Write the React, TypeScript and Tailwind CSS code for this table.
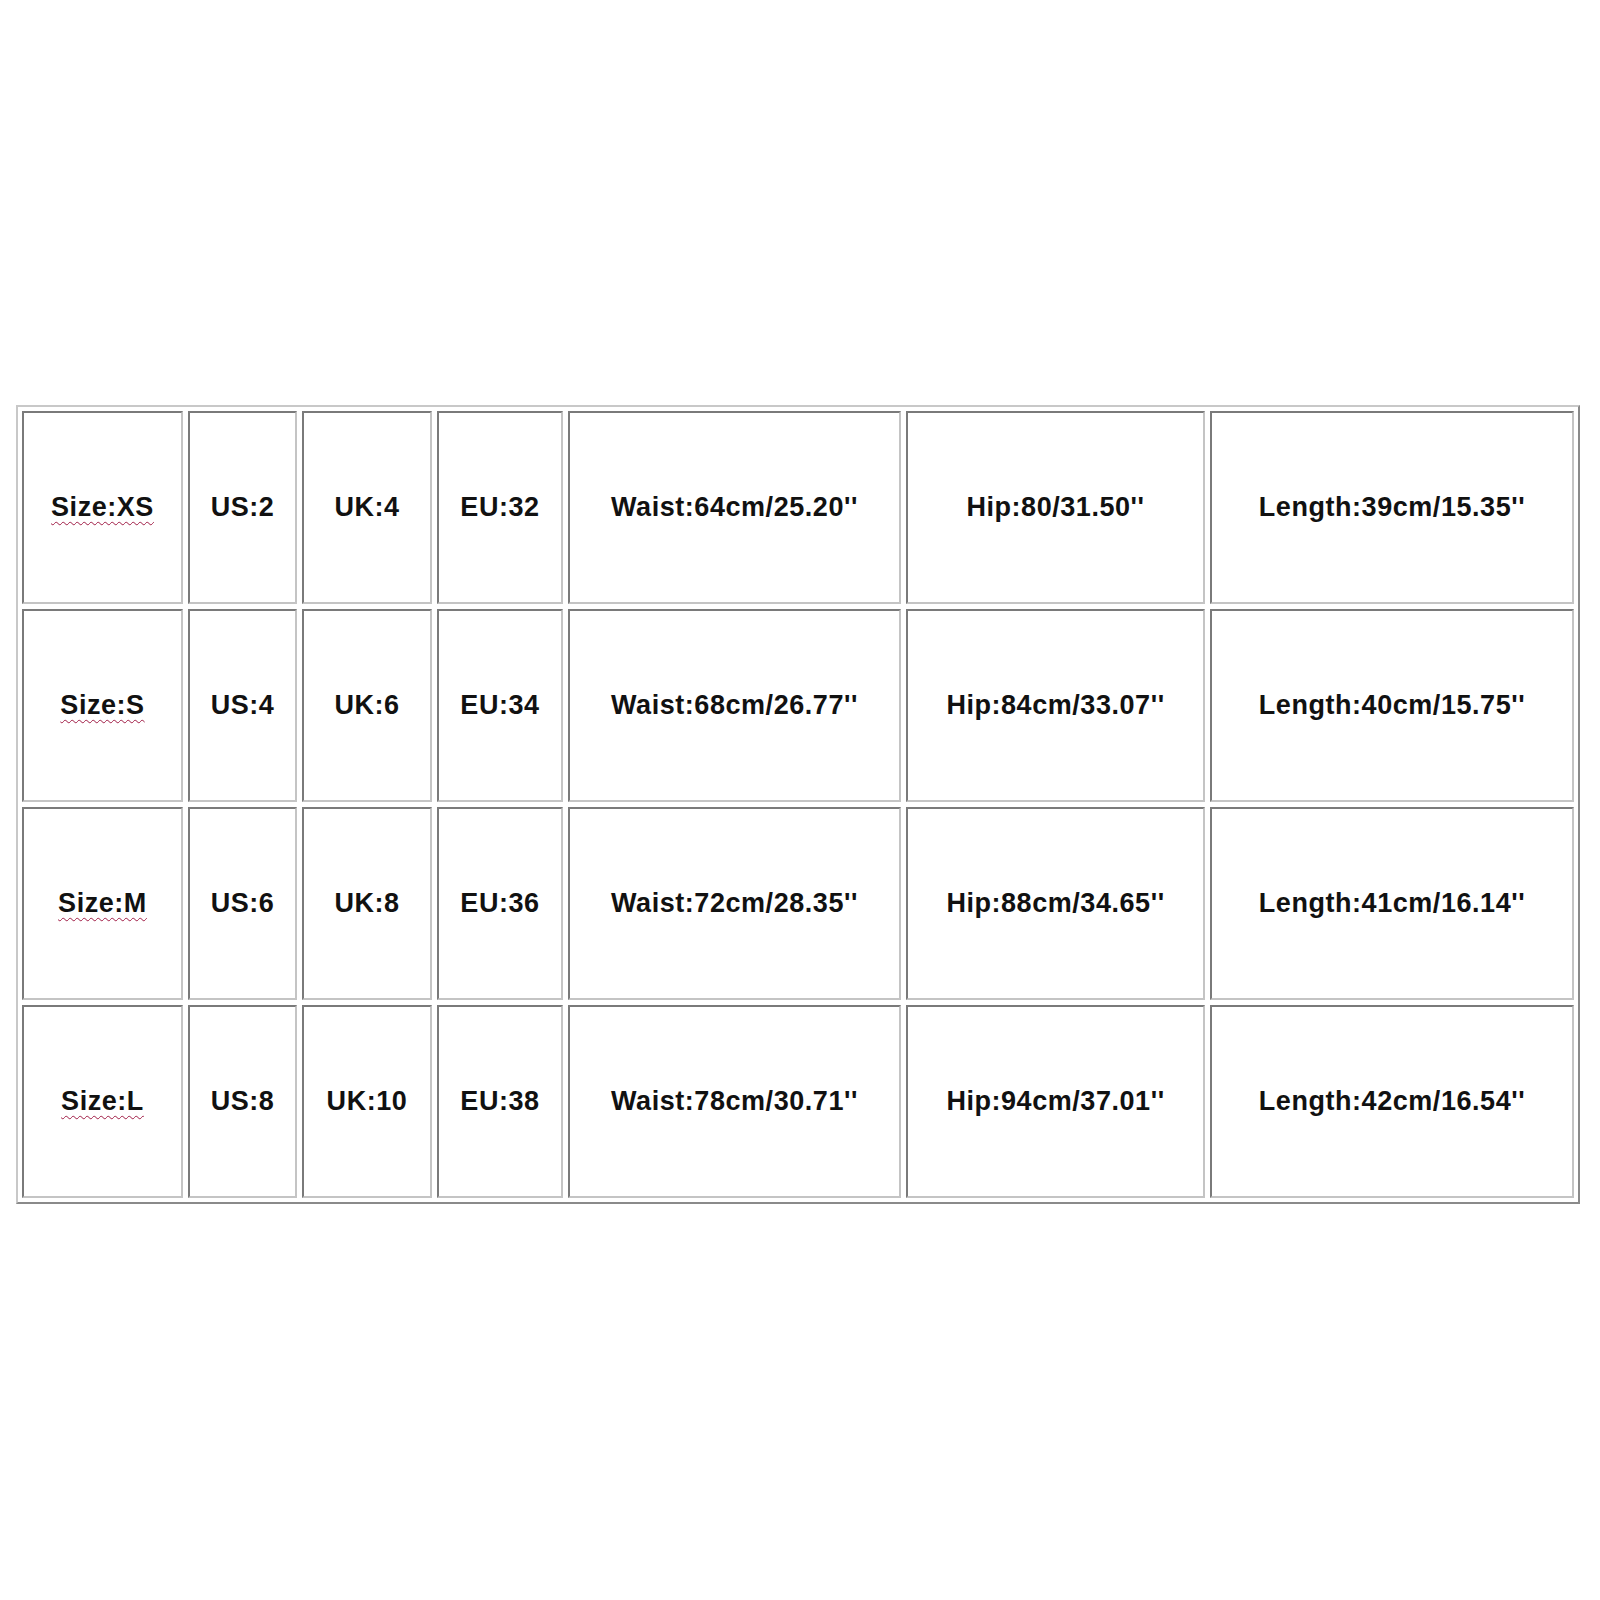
const rows = [
  ["Size:XS", "US:2", "UK:4", "EU:32", "Waist:64cm/25.20''", "Hip:80/31.50''", "Length:39cm/15.35''"],
  ["Size:S", "US:4", "UK:6", "EU:34", "Waist:68cm/26.77''", "Hip:84cm/33.07''", "Length:40cm/15.75''"],
  ["Size:M", "US:6", "UK:8", "EU:36", "Waist:72cm/28.35''", "Hip:88cm/34.65''", "Length:41cm/16.14''"],
  ["Size:L", "US:8", "UK:10", "EU:38", "Waist:78cm/30.71''", "Hip:94cm/37.01''", "Length:42cm/16.54''"],
];

export default function App() {
  return (
    <div className="w-[1600px] h-[1600px] bg-white pt-[405px] pl-[16px]">
      {/* size chart */}
      <div className="w-[1564px] border-2 border-t-[#c8c8c8] border-l-[#c8c8c8] border-r-[#8a8a8a] border-b-[#8a8a8a] p-[4px]">
        <div className="grid grid-cols-[161px_109px_130px_126px_333px_299px_364px] auto-rows-[193px] gap-[5px]">
          {rows.map((row, r) =>
            row.map((cell, c) => (
              <div
                key={r + "-" + c}
                className="flex items-center justify-center border-2 border-t-[#7a7a7a] border-l-[#7a7a7a] border-r-[#c4c4c4] border-b-[#c4c4c4] font-['Liberation_Sans',Arial,sans-serif] font-bold text-[27px] text-[#111] tracking-[0.55px]"
              >
                {c === 0 ? (
                  <span className="underline decoration-wavy decoration-[#a01c45] decoration-1 underline-offset-[5px]">
                    {cell}
                  </span>
                ) : (
                  <span>{cell}</span>
                )}
              </div>
            ))
          )}
        </div>
      </div>
    </div>
  );
}
